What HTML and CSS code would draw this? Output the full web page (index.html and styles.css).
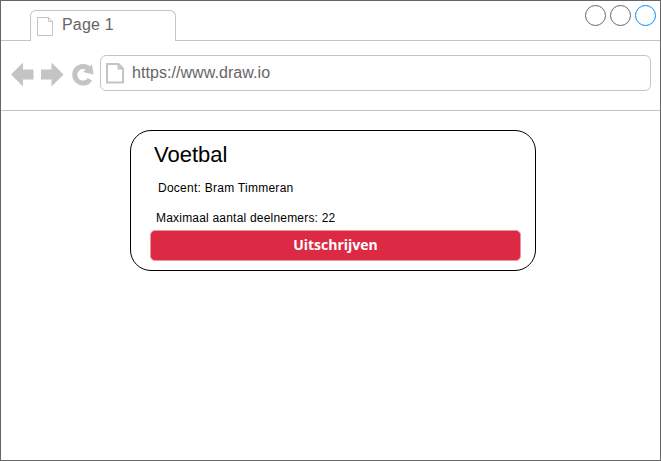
FILE: index.html
```
<!DOCTYPE html>
<html lang="nl">
<head>
<meta charset="utf-8">
<title>Voetbal</title>
<link rel="stylesheet" href="styles.css">
</head>
<body>
<div class="window">
  <header class="tabs">
    <div class="tabs-start"></div>
    <div class="tab">
      <svg class="tab-icon" width="17" height="20" viewBox="0 0 17 20"><path d="M.5.5h11l4 4v14H.5zM11.500.5v4h4"/></svg>
      <span class="tab-title">Page 1</span>
    </div>
    <div class="controls">
      <span class="control"></span>
      <span class="control"></span>
      <span class="control control-active"></span>
    </div>
  </header>
  <nav class="toolbar">
    <svg class="nav-icons" width="84" height="26" viewBox="0 0 84 26">
      <path d="M0 13.500 12 1.500v7h10.500v10H12v7z"/>
      <path d="M52.500 13.500 40.500 1.500v7H30v10h10.500v7z"/>
      <path class="reload" d="M79 18.300A8.300 8.300 0 1 1 78 8"/>
      <path d="M81 3.500 82.500 13.500 72 11z"/>
    </svg>
    <div class="address">
      <svg class="page-icon" width="18" height="21" viewBox="0 0 18 21"><path d="M1 1h11.500l4.500 4.500v14H1zM12.500 1v4.500h4.500"/></svg>
      <span class="url">https://www.draw.io</span>
    </div>
  </nav>
  <main class="content">
    <section class="card">
      <h1 class="title">Voetbal</h1>
      <p class="teacher">Docent: Bram Timmeran</p>
      <p class="capacity">Maximaal aantal deelnemers: 22</p>
      <button class="action">Uitschrijven</button>
    </section>
  </main>
</div>
</body>
</html>
```
FILE: styles.css
```
* { box-sizing: border-box; }
body { margin: 0; background: #fff; font-family: "Liberation Sans", Arial, sans-serif; }
.window { width: 661px; height: 461px; border: 1px solid #666; overflow: hidden; }
.tabs { display: flex; height: 40px; }
.tabs-start { width: 29px; border-bottom: 1px solid #c4c4c4; }
.tab { display: flex; width: 146px; height: 31px; margin-top: 9px; padding: 6px 0 0 6px; border: 1px solid #c4c4c4; border-bottom: 0; border-radius: 6px 6px 0 0; }
.tab-icon, .page-icon { display: block; flex: none; fill: none; stroke: #c4c4c4; }
.tab-title { margin-left: 8px; margin-top: -2px; font-size: 16px; line-height: 20px; letter-spacing: 0.2px; color: #666; }
.controls { display: flex; flex: 1; justify-content: flex-end; gap: 4px; padding: 4px 4px 0 0; border-bottom: 1px solid #c4c4c4; }
.control { width: 21px; height: 21px; border: 1px solid #666; border-radius: 50%; }
.control-active { border-color: #008cff; }
.toolbar { display: flex; height: 70px; padding: 14px 9px 0 10px; border-bottom: 1px solid #c4c4c4; }
.nav-icons { flex: none; margin-top: 6px; fill: #c4c4c4; }
.reload { fill: none; stroke: #c4c4c4; stroke-width: 5; }
.address { display: flex; flex: 1; height: 36px; margin-left: 5px; padding: 7px 0 0 5px; border: 1px solid #c4c4c4; border-radius: 6px; }
.page-icon { stroke-width: 2; }
.url { margin-left: 8px; font-size: 16px; line-height: 20px; letter-spacing: 0.06px; color: #666; }
.content { padding: 19px 0 0 129px; }
.card { width: 406px; height: 141px; padding: 10px 14px 0 19px; border: 1px solid #000; border-radius: 21px; color: #000; }
.title { margin: 0 0 0 4px; font-size: 22px; line-height: 28px; font-weight: 400; }
.teacher, .capacity { margin: 11px 0 0 8px; font-size: 12px; line-height: 16px; letter-spacing: 0.26px; }
.capacity { margin: 14px 0 0 6px; letter-spacing: 0.2px; }
.action { display: block; width: 371px; height: 31px; margin: 4px 0 0; padding: 0 0 2px; border: 1px solid #ed949f; border-radius: 5px; background: #dc2a44; color: #fff; font: bold 14px/27px "Open Sans", sans-serif; }
```
